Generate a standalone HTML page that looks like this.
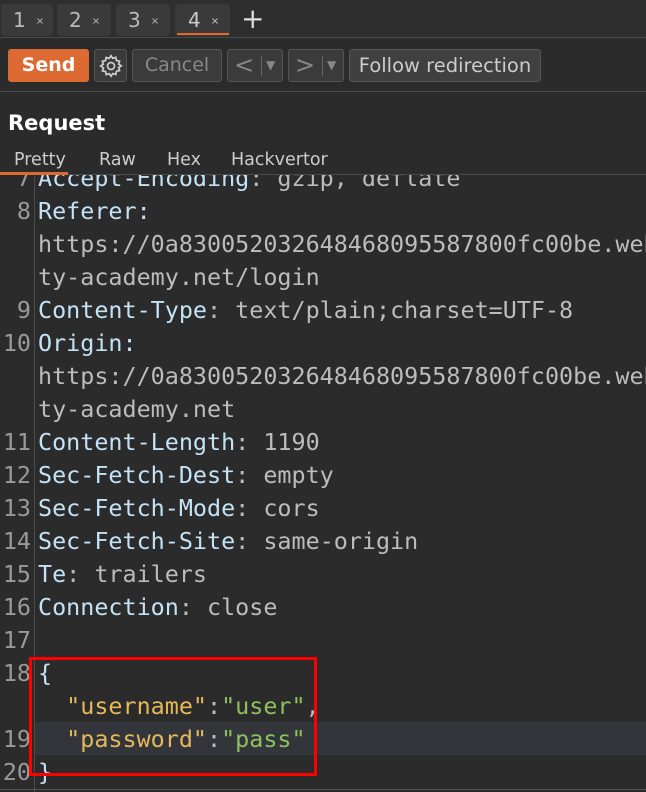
<!DOCTYPE html>
<html><head><meta charset="utf-8"><style>
*{margin:0;padding:0;box-sizing:border-box}
body{width:646px;height:792px;background:#2b2b2b;overflow:hidden;font-family:"DejaVu Sans","Liberation Sans",sans-serif;position:relative;color:#ddd}
.tabbar{position:absolute;left:0;top:0;width:646px;height:38px;background:#2e2e2e;border-bottom:1px solid #4a4a4a}
.tab{position:absolute;top:4px;height:32px;background:#3a3a3a;border-radius:4px;color:#bbb;font-size:20px;line-height:32px;padding-left:12px}
.tab small{font-size:10px;margin-left:10px;vertical-align:3px}
.btn{position:absolute;top:49px;height:33px;border:1px solid #555;border-radius:3px;background:#3b3b3b;color:#888;font-size:19px;line-height:31px;text-align:center}
.code{position:absolute;left:0;top:175px;width:646px;height:617px;overflow:hidden;font-family:"DejaVu Sans Mono","Liberation Mono",monospace;font-size:23.4px}
.row{position:absolute;left:0;height:33px;line-height:33px;white-space:pre;width:646px}
.n{position:absolute;right:615px;color:#9a9a9a}
.t{position:absolute;left:38px}
.k{color:#c3e2f6}.v{color:#bcbcbc}.y{color:#e5b85a}.g{color:#8fc060}
</style></head><body>
<div class="tabbar">
<div class="tab" style="left:1px;width:52px">1<small>×</small></div>
<div class="tab" style="left:57px;width:54px">2<small>×</small></div>
<div class="tab" style="left:116px;width:54px">3<small>×</small></div>
<div class="tab" style="left:175px;width:55px;color:#ccc;padding-left:13px">4<small>×</small></div>
<div style="position:absolute;left:177px;top:33px;width:52px;height:2px;background:#e06a2e"></div>
<div style="position:absolute;left:241px;top:4px;color:#ddd;font-size:28px;line-height:30px">+</div>
</div>
<div style="position:absolute;left:0;top:91px;width:646px;height:1px;background:#4a4a4a"></div>
<div class="btn" style="left:8px;width:81px;background:#dd6a32;border-color:#dd6a32;color:#fff;font-weight:bold">Send</div>
<div class="btn" style="left:94px;width:33px;">
<svg width="26" height="26" viewBox="0 0 24 24" style="margin-top:3px" fill="none" stroke="#ccc" stroke-width="1.6"><circle cx="12" cy="12" r="3.2"/><path d="M12 2.5l1.6 2.4 2.8-.9.6 2.9 2.9.6-.9 2.8 2.4 1.6-2.4 1.6.9 2.8-2.9.6-.6 2.9-2.8-.9L12 21.5l-1.6-2.4-2.8.9-.6-2.9-2.9-.6.9-2.8L2.5 12l2.4-1.6-.9-2.8 2.9-.6.6-2.9 2.8.9z"/></svg></div>
<div class="btn" style="left:132px;width:90px">Cancel</div>
<div class="btn" style="left:227px;width:56px;text-align:left;padding-left:6px;font-size:24px">&lt;<span style="position:absolute;left:33px;top:6px;height:20px;border-left:1px solid #666"></span><span style="position:absolute;left:38px;font-size:12px">▼</span></div>
<div class="btn" style="left:288px;width:56px;text-align:left;padding-left:6px;font-size:24px">&gt;<span style="position:absolute;left:33px;top:6px;height:20px;border-left:1px solid #666"></span><span style="position:absolute;left:38px;font-size:12px">▼</span></div>
<div class="btn" style="left:349px;width:192px;color:#ccc;background:#404040;font-size:19.5px">Follow redirection</div>
<div style="position:absolute;left:8px;top:111px;color:#fff;font-size:21px;font-weight:bold">Request</div>
<div style="position:absolute;top:149px;left:0;font-size:17.5px;color:#ccc;line-height:22px">
<span style="position:absolute;left:14px">Pretty</span><span style="position:absolute;left:99px">Raw</span><span style="position:absolute;left:167px">Hex</span><span style="position:absolute;left:231px">Hackvertor</span></div>
<div style="position:absolute;left:0;top:174px;width:646px;height:1px;background:#4a4a4a"></div>
<div style="position:absolute;left:0;top:172px;width:68px;height:3px;background:#e06a2e"></div>
<div class="code">
<div style="position:absolute;left:34px;top:0;width:1px;height:617px;background:#4c4c4c"></div>
<div class="row" style="top:547px;background:#32353a;left:35px"></div>
<div class="row" style="top:-13px"><span class="n">7</span><span class="t"><span class="k">Accept-Encoding</span><span class="v">: gzip, deflate</span></span></div>
<div class="row" style="top:20px"><span class="n">8</span><span class="t k">Referer:</span></div>
<div class="row" style="top:53px"><span class="t v">https://0a830052032648468095587800fc00be.web</span></div>
<div class="row" style="top:86px"><span class="t v">ty-academy.net/login</span></div>
<div class="row" style="top:119px"><span class="n">9</span><span class="t"><span class="k">Content-Type</span><span class="v">: text/plain;charset=UTF-8</span></span></div>
<div class="row" style="top:152px"><span class="n">10</span><span class="t k">Origin:</span></div>
<div class="row" style="top:185px"><span class="t v">https://0a830052032648468095587800fc00be.web</span></div>
<div class="row" style="top:218px"><span class="t v">ty-academy.net</span></div>
<div class="row" style="top:251px"><span class="n">11</span><span class="t"><span class="k">Content-Length</span><span class="v">: 1190</span></span></div>
<div class="row" style="top:284px"><span class="n">12</span><span class="t"><span class="k">Sec-Fetch-Dest</span><span class="v">: empty</span></span></div>
<div class="row" style="top:317px"><span class="n">13</span><span class="t"><span class="k">Sec-Fetch-Mode</span><span class="v">: cors</span></span></div>
<div class="row" style="top:350px"><span class="n">14</span><span class="t"><span class="k">Sec-Fetch-Site</span><span class="v">: same-origin</span></span></div>
<div class="row" style="top:383px"><span class="n">15</span><span class="t"><span class="k">Te</span><span class="v">: trailers</span></span></div>
<div class="row" style="top:416px"><span class="n">16</span><span class="t"><span class="k">Connection</span><span class="v">: close</span></span></div>
<div class="row" style="top:449px"><span class="n">17</span></div>
<div class="row" style="top:482px"><span class="n">18</span><span class="t k">{</span></div>
<div class="row" style="top:515px"><span class="t">  <span class="y">"username"</span><span class="v">:</span><span class="g">"user"</span><span class="v">,</span></span></div>
<div class="row" style="top:548px"><span class="n">19</span><span class="t">  <span class="y">"password"</span><span class="v">:</span><span class="g">"pass"</span></span></div>
<div class="row" style="top:581px"><span class="n">20</span><span class="t k">}</span></div>
<div style="position:absolute;left:29px;top:482px;width:288px;height:119px;border:3px solid #f00"></div>
<div style="position:absolute;left:0;top:614px;width:646px;height:1px;background:#555"></div>
</div>
</body></html>
